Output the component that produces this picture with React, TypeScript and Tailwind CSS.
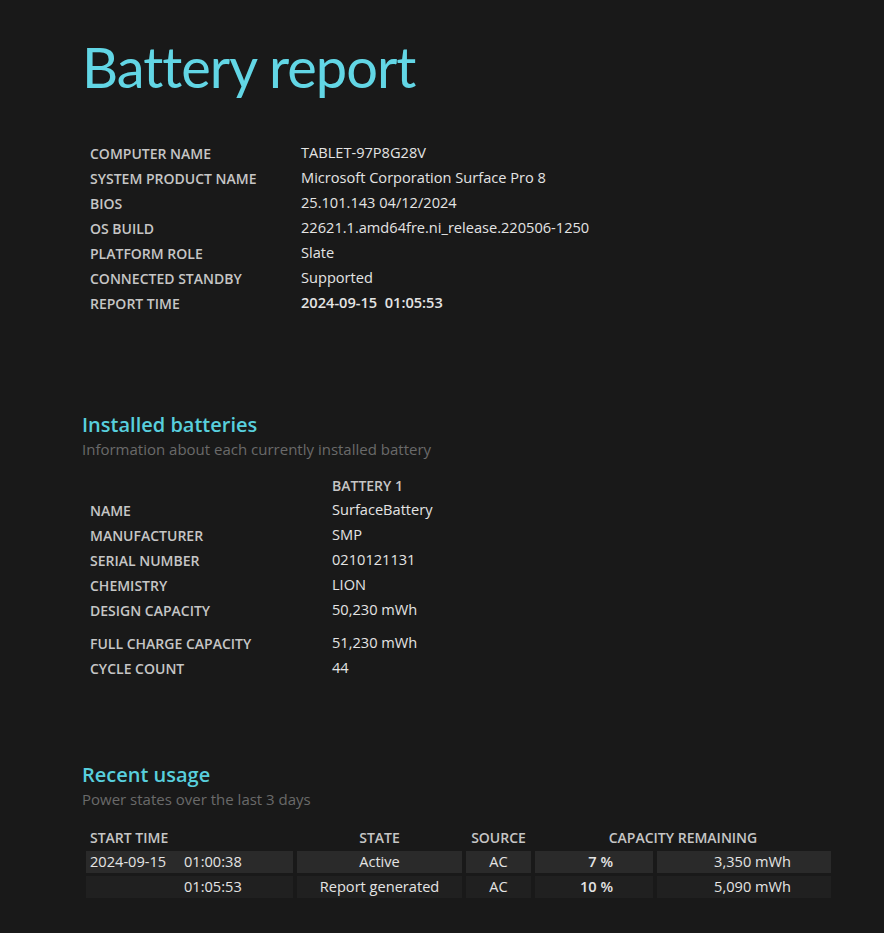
import React from 'react';

const systemInfo: [string, string][] = [
    ['COMPUTER NAME', 'TABLET-97P8G28V'],
    ['SYSTEM PRODUCT NAME', 'Microsoft Corporation Surface Pro 8'],
    ['BIOS', '25.101.143 04/12/2024'],
    ['OS BUILD', '22621.1.amd64fre.ni_release.220506-1250'],
    ['PLATFORM ROLE', 'Slate'],
    ['CONNECTED STANDBY', 'Supported'],
];

const batteryInfo: [string, string][] = [
    ['NAME', 'SurfaceBattery'],
    ['MANUFACTURER', 'SMP'],
    ['SERIAL NUMBER', '0210121131'],
    ['CHEMISTRY', 'LION'],
    ['DESIGN CAPACITY', '50,230 mWh'],
];

const usage = [
    { date: '2024-09-15', time: '01:00:38', state: 'Active', source: 'AC', pct: '7 %', mwh: '3,350 mWh', bg: 'bg-[#2a2a2a]' },
    { date: '', time: '01:05:53', state: 'Report generated', source: 'AC', pct: '10 %', mwh: '5,090 mWh', bg: 'bg-[#202020]' },
];

const Label = ({ children }: { children: React.ReactNode }) => (
    <span className="text-[14px] font-semibold text-[#c6c6c6]">{children}</span>
);

const SectionHeader = ({ title, subtitle }: { title: string; subtitle: string }) => (
    <div>
        <h2 className="text-[20px] leading-[28px] font-semibold text-[#58cfdd]">{title}</h2>
        <p className="text-[15px] leading-[20px] text-[#6a6a6a]">{subtitle}</p>
    </div>
);

export default function App() {
    return (
        <div className="min-h-screen bg-[#191919] pl-[82px] text-[#e4e4e4] font-['Segoe_UI','Open_Sans',sans-serif]">
            <h1 className="pt-[31px] text-[56px] leading-[72px] tracking-[-1px] text-[#62d6e5] font-['Segoe_UI','Lato',sans-serif]">
                Battery report
            </h1>

            {/* system info */}
            <div className="mt-[37px] pl-[8px]">
                {systemInfo.map(([k, v]) => (
                    <div key={k} className="flex h-[25px] items-center">
                        <div className="w-[211px]"><Label>{k}</Label></div>
                        <span className="text-[14.6px]">{v}</span>
                    </div>
                ))}
                <div className="flex h-[25px] items-center">
                    <div className="w-[211px]"><Label>REPORT TIME</Label></div>
                    <span className="text-[14.6px] font-semibold">2024-09-15&nbsp;&nbsp;01:05:53</span>
                </div>
            </div>

            <div className="mt-[96px]">
                <SectionHeader title="Installed batteries" subtitle="Information about each currently installed battery" />
            </div>

            <div className="mt-[15px] pl-[8px]">
                <div className="flex h-[23px] items-center">
                    <div className="w-[242px]" />
                    <Label>BATTERY 1</Label>
                </div>
                {batteryInfo.map(([k, v]) => (
                    <div key={k} className="flex h-[25px] items-center">
                        <div className="w-[242px]"><Label>{k}</Label></div>
                        <span className="text-[14.6px]">{v}</span>
                    </div>
                ))}
                <div className="mt-[8px] flex h-[25px] items-center">
                    <div className="w-[242px]"><Label>FULL CHARGE CAPACITY</Label></div>
                    <span className="text-[14.6px]">51,230 mWh</span>
                </div>
                <div className="flex h-[25px] items-center">
                    <div className="w-[242px]"><Label>CYCLE COUNT</Label></div>
                    <span className="text-[14.6px]">44</span>
                </div>
            </div>

            <div className="mt-[81px]">
                <SectionHeader title="Recent usage" subtitle="Power states over the last 3 days" />
            </div>

            <div className="mt-[17px] ml-[4px] grid grid-cols-[207px_165px_65px_118px_174px] gap-x-[4px] gap-y-[3px] pb-[30px]">
                <div className="flex h-[22px] items-center pl-[4px]"><Label>START TIME</Label></div>
                <div className="flex h-[22px] items-center justify-center"><Label>STATE</Label></div>
                <div className="flex h-[22px] items-center justify-center"><Label>SOURCE</Label></div>
                <div className="col-span-2 flex h-[22px] items-center justify-center"><Label>CAPACITY REMAINING</Label></div>

                {usage.map((r) => (
                    <React.Fragment key={r.time}>
                        <div className={`flex h-[22px] items-center pl-[4px] text-[14.6px] ${r.bg}`}>
                            <span className="w-[94px]">{r.date}</span>
                            <span>{r.time}</span>
                        </div>
                        <div className={`flex h-[22px] items-center justify-center text-[14.6px] ${r.bg}`}>{r.state}</div>
                        <div className={`flex h-[22px] items-center justify-center text-[14.6px] ${r.bg}`}>{r.source}</div>
                        <div className={`flex h-[22px] items-center justify-end pr-[40px] text-[14.6px] font-semibold ${r.bg}`}>{r.pct}</div>
                        <div className={`flex h-[22px] items-center justify-end pr-[40px] text-[14.6px] ${r.bg}`}>{r.mwh}</div>
                    </React.Fragment>
                ))}
            </div>
        </div>
    );
}
